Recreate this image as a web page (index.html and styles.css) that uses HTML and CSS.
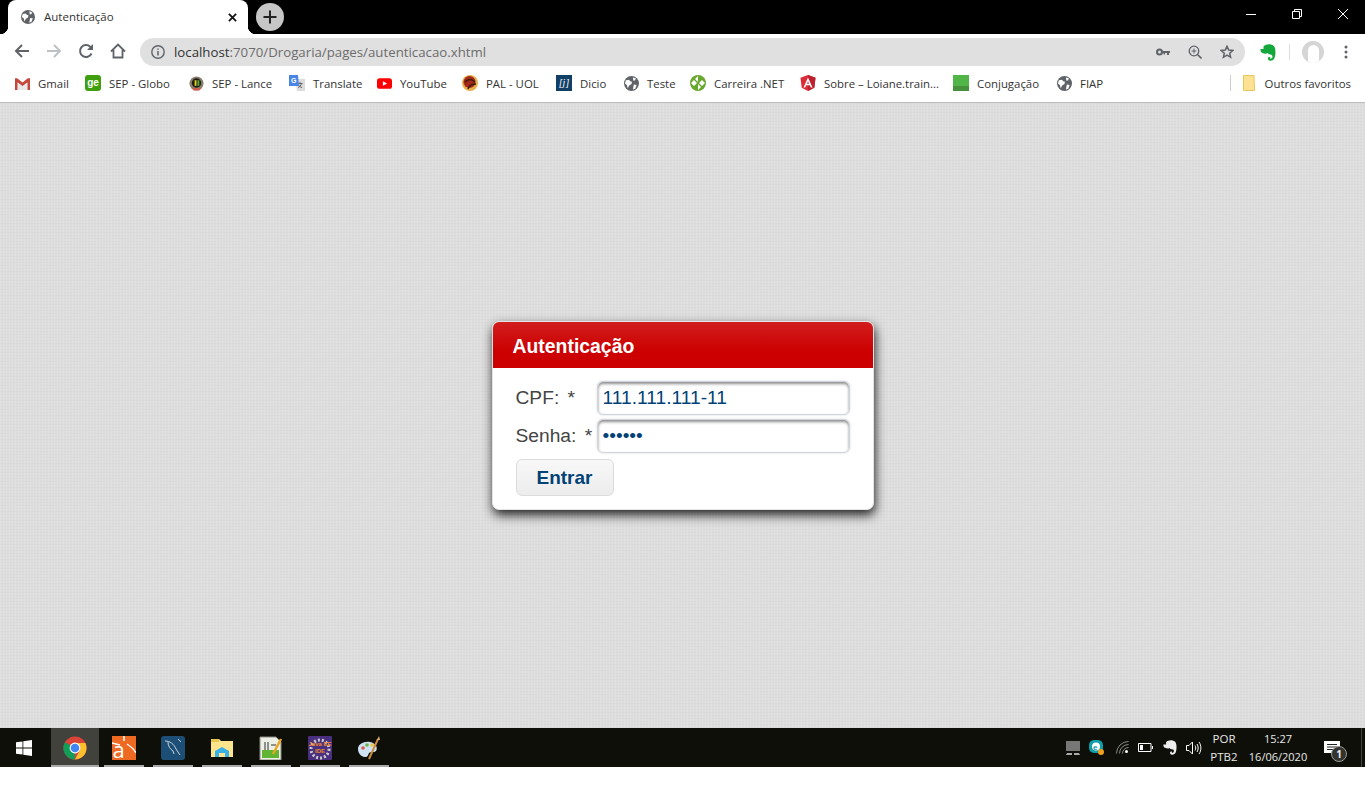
FILE: index.html

```html
<!DOCTYPE html>
<html lang="pt-BR">

<head>
    <meta charset="utf-8">
    <title>Autenticação</title>
    <link rel="stylesheet" href="styles.css">
</head>

<body>
    <svg class="defs" width="0" height="0">
        <symbol id="globe" viewBox="0 0 16 16">
            <circle cx="8" cy="8" r="8" fill="#5f6368" />
            <path d="M2 4.500l3.500-.5 1 1.500 2 .5-.5 2.500-2.500 1.500-1.500 3-1-3.500-2-1.500zM9.500 1.500l3 1-.5 2-2 .5zM10.500 9l3 .5-1.500 4-2.500 1 .5-3z" fill="#fff" />
        </symbol>
        <symbol id="elephant" viewBox="0 0 16 17">
            <path d="M3.500 2.500C5 .8 8 0 10.800.5c2.700.5 4 1.800 4.400 4.500.5 3.300.3 6.300-.6 8.800-.8 2.300-3.200 3.400-5.300 2.700-1.700-.6-1.800-3-.2-3.400.9-.2 1.400.5 1.400 1l-.8.2c.6.700 2.300.4 2.700-1.100.3-1.300-.3-2.500-2-2.700-1.500-.2-2.300-.6-2.700-1.500-1.300 1-3.400.8-5.200-.1C1 8.700.4 6.800.4 5H3.500z" />
        </symbol>
    </svg>

    <header class="titlebar">
        <div class="tab">
            <svg class="tab-fav"><use href="#globe" /></svg>
            <span class="tab-title">Autenticação</span>
            <svg class="tab-close" viewBox="0 0 10 10"><path d="M1 1l8 8M9 1l-8 8" stroke="#111" stroke-width="2" /></svg>
        </div>
        <div class="newtab">
            <svg viewBox="0 0 14 14" width="14" height="14"><path d="M7 .5v13M.5 7h13" stroke="#222" stroke-width="2" /></svg>
        </div>
        <div class="winctl">
            <svg viewBox="0 0 10 10"><path d="M0 5.500h10" stroke="#fff" /></svg>
            <svg viewBox="0 0 10 10"><path d="M.5 2.500h7v7h-7zM2.500 2.500v-2h7v7h-2" stroke="#fff" fill="none" /></svg>
            <svg viewBox="0 0 10 10"><path d="M0 0l10 10M10 0l-10 10" stroke="#fff" /></svg>
        </div>
    </header>

    <nav class="toolbar">
        <svg class="tool" viewBox="0 0 16 16"><path d="M15 8H2M8 2L2 8l6 6" stroke="#5f6368" stroke-width="2" fill="none" /></svg>
        <svg class="tool" viewBox="0 0 16 16"><path d="M1 8h13M8 2l6 6-6 6" stroke="#bdc1c6" stroke-width="2" fill="none" /></svg>
        <svg class="tool" viewBox="0 0 16 16"><path d="M13.500 10.500A6 6 0 1 1 12.200 3.700L14 5.500" stroke="#5f6368" stroke-width="2" fill="none" /><path d="M15 1v6H9z" fill="#5f6368" /></svg>
        <svg class="tool" viewBox="0 0 16 16"><path d="M1 8.500L8 1.500l7 7M3.500 7v7.500h9V7" stroke="#5f6368" stroke-width="1.800" fill="none" /></svg>
        <div class="omnibox">
            <svg class="omni-i" viewBox="0 0 14 14"><circle cx="7" cy="7" r="6.200" fill="none" stroke="#5f6368" stroke-width="1.400" /><path d="M7 6v4.500M7 3.400v1.400" stroke="#5f6368" stroke-width="1.500" /></svg>
            <span class="url"><b>localhost</b>:7070/Drogaria/pages/autenticacao.xhtml</span>
            <svg class="omni-tool" viewBox="0 0 14 14"><circle cx="3.500" cy="7" r="2.500" fill="none" stroke="#5f6368" stroke-width="2" /><path d="M6 6h8v2h-1v2h-2V8H9v1.500H7.500V8H6z" fill="#5f6368" /></svg>
            <svg class="omni-tool" viewBox="0 0 14 14"><circle cx="6" cy="6" r="4.800" fill="none" stroke="#5f6368" stroke-width="1.300" /><path d="M9.500 9.500L13.500 13.500" stroke="#5f6368" stroke-width="1.600" /><path d="M6 3.500v5M3.500 6h5" stroke="#5f6368" /></svg>
            <svg class="omni-tool" viewBox="0 0 14 14"><path d="M7 1.300l1.700 3.800 4.100.4-3.100 2.700.9 4.100L7 10.200l-3.600 2.100.9-4.100-3.100-2.700 4.100-.4z" fill="none" stroke="#5f6368" stroke-width="1.500" /></svg>
        </div>
        <svg class="evernote"><use href="#elephant" fill="#14a83c" /></svg>
        <span class="tool-sep"></span>
        <div class="avatar"><span></span></div>
        <svg class="menu" viewBox="0 0 4 14"><circle cx="2" cy="2" r="1.500" /><circle cx="2" cy="7" r="1.500" /><circle cx="2" cy="12" r="1.500" /></svg>
    </nav>

    <div class="bookmarks">
        <a class="bm bm-small"><svg viewBox="0 0 14 12"><path d="M0 1h2l5 4 5-4h2v11h-2.500V5L7 8.500 2.500 5v7H0z" fill="#c5463a" /><path d="M2.500 5L7 8.500 11.500 5v7h-9z" fill="#e8e8e8" /></svg>Gmail</a>
        <a class="bm"><span class="ico-ge">ge</span>SEP - Globo</a>
        <a class="bm bm-small"><svg viewBox="0 0 16 16"><circle cx="8" cy="8" r="7.500" fill="#8a7d6c" /><circle cx="8" cy="7.500" r="5" fill="#1f1f16" /><path d="M6 4.500h2v6H6z" fill="#e7d21c" /><path d="M9 4.500h2v6H9z" fill="#58a83a" /><path d="M3 13h10l-2 2.500H5z" fill="#d75a4a" /></svg>SEP - Lance</a>
        <a class="bm"><svg viewBox="0 0 16 16"><path d="M6 4h10v12H8z" fill="#dcdcdc" /><path d="M11 7v1M8.500 8.500h5M12.500 8.500c-.5 2-2 3.500-3.500 4M9.500 9.500c.5 1.500 2 3 3.500 3" stroke="#666" fill="none" /><path d="M0 0h9l1 11H0z" fill="#4a86e8" /><text x="2" y="8" class="gt">G</text></svg>Translate</a>
        <a class="bm bm-small"><svg viewBox="0 0 14 10"><rect width="14" height="10" rx="2.500" fill="#f00" /><path d="M5.500 2.800v4.400L9.500 5z" fill="#fff" /></svg>YouTube</a>
        <a class="bm"><svg viewBox="0 0 16 16"><circle cx="8" cy="8" r="8" fill="#e8b04a" /><circle cx="7.500" cy="7" r="6" fill="#a32a1a" /><path d="M3 7c3-3 7-3 10 0M6 14c1-3 4-5 8-5" stroke="#3a1a10" stroke-width="1.500" fill="none" /></svg>PAL - UOL</a>
        <a class="bm"><span class="ico-dicio">[j]</span>Dicio</a>
        <a class="bm bm-small"><svg><use href="#globe" /></svg>Teste</a>
        <a class="bm"><svg viewBox="0 0 16 16"><circle cx="8" cy="8" r="8" fill="#69a82f" /><path d="M8 1L5 4l3 3zM15 8l-3-3-3 3 3 3zM8 15l3-3-3-3zM1 8l3 3 3-3-3-3z" fill="#fff" /></svg>Carreira .NET</a>
        <a class="bm"><svg viewBox="0 0 16 16"><path d="M8 0l7.500 2.700-1.200 10L8 16l-6.300-3.300-1.200-10z" fill="#dd2c36" /><path d="M8 0l7.500 2.700-1.200 10L8 16z" fill="#bd2130" /><path d="M8 2.500L3.500 12.500h1.700l.9-2.300h3.800l.9 2.300h1.700zM7 8.800L8 6.300l1 2.500z" fill="#fff" /></svg>Sobre – Loiane.train...</a>
        <a class="bm"><span class="ico-green"></span>Conjugação</a>
        <a class="bm bm-small"><svg><use href="#globe" /></svg>FIAP</a>
        <span class="bm-sep"></span>
        <a class="bm bm-other"><svg viewBox="0 0 12 16"><path d="M.5.500h10.500l.5 15H.5z" fill="#fde293" stroke="#e8c65a" /></svg>Outros favoritos</a>
    </div>

    <main class="page">
        <form class="card">
            <h1 class="card-title">Autenticação</h1>
            <div class="card-body">
                <div class="row">
                    <label class="lbl" for="cpf">CPF: *</label>
                    <input class="field" id="cpf" type="text" value="111.111.111-11">
                </div>
                <div class="row">
                    <label class="lbl" for="senha">Senha: *</label>
                    <input class="field" id="senha" type="password" value="111111">
                </div>
                <button class="btn" type="button">Entrar</button>
            </div>
        </form>
    </main>

    <footer class="taskbar">
        <svg class="start" viewBox="0 0 16 16"><path d="M0 2.300l6.500-.9v6.200H0zM7.300 1.300L16 0v7.600H7.300zM0 8.400h6.500v6.200L0 13.700zM7.300 8.400H16V16l-8.700-1.300z" fill="#fff" /></svg>
        <div class="tasks">
            <div class="task active"><svg viewBox="0 0 24 24"><circle cx="12" cy="12" r="11.500" fill="#db4437" /><path d="M12 12L2 6.200A11.500 11.500 0 0 0 12 23.500z" fill="#0f9d58" /><path d="M12 7h10.400A11.500 11.500 0 0 1 12 23.500L17 14z" fill="#fbc02d" /><circle cx="12" cy="12" r="5.400" fill="#fff" /><circle cx="12" cy="12" r="4.300" fill="#4285f4" /></svg></div>
            <div class="task">
                <div class="ico-a">a<svg class="ico-a-rays" viewBox="0 0 24 24"><path d="M0 7l8 2M12 0v5M24 17C22 13 18 10 15 8" stroke="#fff" stroke-width="1.500" fill="none" /></svg></div>
            </div>
            <div class="task"><svg viewBox="0 0 24 24"><rect width="24" height="24" rx="3" fill="#1d4f76" /><path d="M4 5c5 0 9 3 11 8 1 2 3 4 4 6M7 6c0 4 2 7 5 9l1 3M17 3l3 3" stroke="#c7d3dc" fill="none" /></svg></div>
            <div class="task"><svg viewBox="0 0 24 24"><path d="M1 3h8l2 2h12v16H1z" fill="#fde48d" /><path d="M1 3h8v3H1z" fill="#e8c64f" /><path d="M5 21v-6l7-4 7 4v6h-4v-4H9v4z" fill="#38b1e8" /></svg></div>
            <div class="task"><svg viewBox="0 0 24 24"><path d="M1 1h16l5 5v18H1z" fill="#ecefe6" stroke="#8a8a80" /><path d="M3 14h17v8H3z" fill="#62b534" /><path d="M6 6v8M9 6v8M12 9h5" stroke="#333" /><path d="M14 18L22 3" stroke="#e9a820" stroke-width="2.500" /></svg></div>
            <div class="task"><svg viewBox="0 0 24 24"><rect width="24" height="24" rx="1" fill="#4b2f7f" /><circle cx="12" cy="13" r="9" fill="none" stroke="#ccc" stroke-width="3" stroke-dasharray="2 2" /><text x="12" y="10" class="tj">Java EE</text><text x="12" y="17" class="tj">IDE</text></svg></div>
            <div class="task"><svg viewBox="0 0 24 24"><path d="M1 13c0-5 6-8 12-7 6 1 8 6 6 9-2 2-5 0-7 2-1 2-1 4-4 4-4 0-7-4-7-8z" fill="#cfe3f5" /><circle cx="6" cy="12" r="1.800" fill="#e05a4a" /><circle cx="10" cy="9" r="1.800" fill="#6bb84a" /><circle cx="15" cy="9" r="1.800" fill="#eec43a" /><path d="M12 23L21 3" stroke="#c98b3a" stroke-width="2" /><path d="M20 4l2-4 1 4z" fill="#d8b070" /></svg></div>
        </div>
        <div class="tray">
            <svg class="t1" viewBox="0 0 14 14"><rect width="14" height="10" fill="#777" /><path d="M1 12h5v2H0zM8 12h5l1 2H8z" fill="#aaa" /></svg>
            <svg class="t2" viewBox="0 0 15 15"><rect width="14" height="13" rx="5" fill="#0f9ea8" /><circle cx="7" cy="6.500" r="4" fill="#fff" /><text x="4" y="9.500" class="te">e</text><circle cx="12" cy="12" r="3" fill="#f0a020" /></svg>
            <svg class="t3" viewBox="0 0 13 13"><path d="M.5 12.500A12 12 0 0 1 12.500.5M3.500 12.500A9 9 0 0 1 12.500 3.500M6.500 12.500A6 6 0 0 1 12.500 6.500" stroke="#8b8b85" fill="none" /><circle cx="10.500" cy="10.500" r="1.500" fill="#fff" /></svg>
            <svg class="t4" viewBox="0 0 15 9"><path d="M.5.500h12.500v8H.5z" fill="none" stroke="#fff" /><path d="M14 3h1v3h-1z" fill="#fff" /><path d="M2 2h3v5H2z" fill="#fff" /></svg>
            <svg class="t5"><use href="#elephant" fill="#eee" /></svg>
            <svg class="t6" viewBox="0 0 16 14"><path d="M.5 4.500h2.500L6.500 1v12L3 9.500H.5z" fill="none" stroke="#fff" /><path d="M9 4.500c1 1.500 1 3.500 0 5M11 3c1.600 2.500 1.600 5.500 0 8M13 1c2.500 3.500 2.500 8.500 0 12" fill="none" stroke="#fff" /></svg>
            <div class="lang"><span>POR</span><span>PTB2</span></div>
            <div class="clock"><span>15:27</span><span>16/06/2020</span></div>
            <div class="notif">
                <svg viewBox="0 0 16 14"><path d="M0 0h16v12H0z" fill="#fff" /><path d="M3 3.500h10M3 6h10M3 8.500h10" stroke="#222" /></svg>
                <span class="badge">1</span>
            </div>
            <span class="showdesk"></span>
        </div>
    </footer>
</body>

</html>
```

FILE: styles.css

```css
* {
    box-sizing: border-box;
}

html,
body {
    margin: 0;
    height: 800px;
    overflow: hidden;
    background: #fff;
}

body {
    display: flex;
    flex-direction: column;
    font-family: "Open Sans", sans-serif;
}

svg {
    display: block;
    flex: none;
}

.defs {
    position: absolute;
}

/* title bar */
.titlebar {
    height: 34px;
    background: #000;
    display: flex;
    align-items: flex-end;
    padding-left: 8px;
}

.tab {
    position: relative;
    width: 240px;
    height: 34px;
    background: #fff;
    border-radius: 8px 8px 0 0;
    display: flex;
    align-items: center;
    padding-left: 13px;
}

.tab::before,
.tab::after {
    content: "";
    position: absolute;
    bottom: 0;
    width: 8px;
    height: 8px;
}

.tab::before {
    left: -8px;
    background: radial-gradient(circle at 0 0, #000 8px, #fff 8.5px);
}

.tab::after {
    right: -8px;
    background: radial-gradient(circle at 100% 0, #000 8px, #fff 8.5px);
}

.tab-fav {
    width: 14px;
    height: 14px;
}

.tab-title {
    margin: -2px 0 0 9px;
    font-size: 11.5px;
    color: #333;
    flex: 1;
}

.tab-close {
    width: 9px;
    height: 9px;
    margin-right: 11px;
}

.newtab {
    width: 28px;
    height: 28px;
    margin: 0 0 3px 8px;
    border-radius: 50%;
    background: #c6c6c6;
    display: flex;
    align-items: center;
    justify-content: center;
}

.winctl {
    margin-left: auto;
    align-self: flex-start;
    display: flex;
    gap: 36px;
    padding: 9px 17px 0 0;
}

.winctl svg {
    width: 10px;
    height: 10px;
}

/* toolbar */
.toolbar {
    height: 34px;
    background: #fff;
    display: flex;
    align-items: center;
    padding-left: 14px;
}

.tool {
    width: 16px;
    height: 16px;
    margin-right: 16px;
}

.omnibox {
    width: 1105px;
    height: 28px;
    margin: 2px 0 0 -2px;
    border-radius: 14px;
    background: #e0e0e0;
    display: flex;
    align-items: center;
    padding-left: 11px;
}

.omni-i {
    width: 14px;
    height: 14px;
}

.url {
    margin-left: 9px;
    flex: 1;
    font-size: 13.25px;
    color: #6c6c6c;
}

.url b {
    font-weight: normal;
    color: #333;
}

.omni-tool {
    width: 14px;
    height: 14px;
    margin-right: 18px;
}

.omni-tool:last-child {
    margin-right: 11px;
}

.evernote {
    width: 16px;
    height: 17px;
    margin: 2px 0 0 15px;
}

.tool-sep {
    width: 1px;
    height: 16px;
    margin: 2px 0 0 13px;
    background: #ddd;
}

.avatar {
    width: 22px;
    height: 22px;
    margin: 2px 0 0 12px;
    border-radius: 50%;
    background: #d5d5d5;
    display: flex;
    justify-content: center;
    align-items: flex-end;
    overflow: hidden;
}

.avatar span {
    width: 11px;
    height: 18px;
    border-radius: 6px 6px 3px 3px;
    background: #fff;
}

.menu {
    width: 4px;
    height: 14px;
    margin: 2px 0 0 20px;
    fill: #5f6368;
}

/* bookmarks */
.bookmarks {
    height: 35px;
    background: #fff;
    border-bottom: 1px solid #bdbdbd;
    display: grid;
    grid-template-columns: 70px 104px 100px 88px 85px 94px 68px 66px 110px 153px 104px 1fr 13px auto;
    align-items: center;
    padding: 0 14px 4px 15px;
    font-size: 11.4px;
    color: #333;
}

.bm {
    display: flex;
    align-items: center;
    gap: 8px;
    white-space: nowrap;
}

.bm svg {
    width: 16px;
    height: 16px;
}

.bm-small svg {
    width: 15px;
    height: 15px;
}

.bm-other svg {
    width: 12px;
    height: 16px;
    margin-right: 2px;
}

.bm-sep {
    grid-column: 13;
    width: 1px;
    height: 16px;
    background: #ccc;
}

.ico-ge {
    width: 16px;
    height: 16px;
    border-radius: 3px;
    background: #3f9f0f;
    color: #fff;
    font: bold 10px/15px "Liberation Sans", sans-serif;
    text-align: center;
}

.ico-dicio {
    width: 16px;
    height: 16px;
    background: #123f66;
    color: #fff;
    font: italic 10px/15px "Liberation Serif", serif;
    text-align: center;
}

.ico-green {
    width: 16px;
    height: 16px;
    background: linear-gradient(#52b548 70%, #45913c 70%);
}

.gt {
    font: bold 7px "Liberation Sans", sans-serif;
    fill: #fff;
}

/* login page */
.page {
    height: 625px;
    background-color: #dddddd;
    background-image:
        repeating-linear-gradient(90deg, rgba(255, 255, 255, .15) 0 1px, transparent 1px 3px),
        repeating-linear-gradient(0deg, rgba(0, 0, 0, .02) 0 1px, transparent 1px 3px);
    display: flex;
    align-items: center;
    justify-content: center;
}

.card {
    width: 382px;
    height: 189px;
    background: #fff;
    border: 1px solid #e4e4e4;
    border-radius: 7px;
    box-shadow: 1px 5px 11px rgba(0, 0, 0, .85);
    overflow: hidden;
    font-family: "Liberation Sans", Arial, sans-serif;
}

.card-title {
    height: 46px;
    margin: 0;
    padding-left: 20px;
    background: linear-gradient(#d11d1d, #cc0000 65%);
    color: #fff;
    font-size: 19.4px;
    font-weight: bold;
    line-height: 48px;
}

.card-body {
    padding: 13px 23px 0;
}

.row {
    display: flex;
    align-items: center;
    height: 34px;
    margin-bottom: 4px;
}

.lbl {
    width: 81px;
    font-size: 19.2px;
    word-spacing: 3px;
    color: #444;
    white-space: nowrap;
}

.field {
    width: 253px;
    height: 34px;
    padding: 0 5px;
    border: 1px solid #d0d5dc;
    border-radius: 6px;
    box-shadow: inset 0 2px 3px rgba(0, 0, 0, .45), 0 0 2px rgba(160, 170, 185, .5);
    color: #004276;
    background: #fff;
    font: 19.2px "Liberation Sans", Arial, sans-serif;
    outline: none;
}

.btn {
    display: block;
    width: 98px;
    height: 37px;
    margin-top: 6px;
    border: 1px solid #dcdcdc;
    border-radius: 6px;
    background: linear-gradient(#f8f8f8, #ececec);
    color: #004276;
    font: bold 19px "Liberation Sans", Arial, sans-serif;
    padding: 0;
}

/* windows taskbar */
.taskbar {
    height: 39px;
    background: #0f0f09;
    display: flex;
    align-items: center;
    padding-left: 16px;
    color: #e8e8e8;
}

.start {
    width: 16px;
    height: 16px;
}

.tasks {
    display: flex;
    align-self: stretch;
    margin-left: 19px;
}

.task {
    width: 49px;
    display: flex;
    justify-content: center;
    padding-top: 8px;
    background: linear-gradient(#aaa, #aaa) center bottom / 40px 2px no-repeat;
}

.task.active {
    width: 48px;
    background: linear-gradient(#aaa, #aaa) center bottom / 48px 2px no-repeat, #42423d;
}

.task svg {
    width: 24px;
    height: 24px;
}

.ico-a {
    position: relative;
    width: 24px;
    height: 24px;
    padding: 3px 0 0 1px;
    background: #ee6a23;
    color: #fff;
    font: 22px/21px "Open Sans", sans-serif;
}

.task .ico-a-rays {
    position: absolute;
    left: 0;
    top: 0;
}

.tj {
    font: bold 6px "Liberation Sans", sans-serif;
    fill: #ee8a2a;
    text-anchor: middle;
}

.te {
    font: bold 8px "Liberation Sans", sans-serif;
    fill: #0f9ea8;
}

.tray {
    margin-left: auto;
    display: flex;
    align-items: center;
    align-self: stretch;
}

.t1 {
    width: 14px;
    height: 14px;
}

.t2 {
    width: 15px;
    height: 15px;
    margin-left: 9px;
}

.t3 {
    width: 13px;
    height: 13px;
    margin-left: 12px;
}

.t4 {
    width: 15px;
    height: 9px;
    margin-left: 9px;
}

.t5 {
    width: 14px;
    height: 15px;
    margin-left: 10px;
}

.t6 {
    width: 16px;
    height: 14px;
    margin-left: 9px;
}

.lang,
.clock {
    display: flex;
    flex-direction: column;
    align-items: center;
    font-size: 11px;
    line-height: 18px;
}

.lang {
    width: 28px;
    margin-left: 8px;
    font-size: 11.5px;
}

.clock {
    width: 60px;
    margin-left: 10px;
}

.notif {
    position: relative;
    margin-left: 16px;
    width: 16px;
}

.notif svg {
    width: 16px;
    height: 14px;
}

.badge {
    position: absolute;
    left: 7px;
    top: 5px;
    width: 16px;
    height: 16px;
    border-radius: 50%;
    border: 1px solid #999;
    background: #33332f;
    color: #eee;
    font: bold 10px/14px "Open Sans", sans-serif;
    text-align: center;
}

.showdesk {
    width: 1px;
    height: 100%;
    margin: 0 3px 0 21px;
    background: #444;
}
```
